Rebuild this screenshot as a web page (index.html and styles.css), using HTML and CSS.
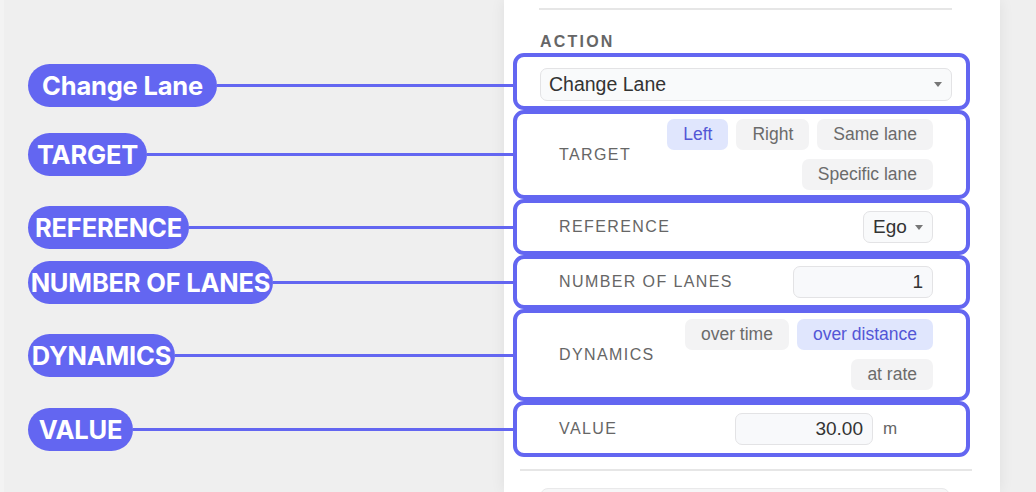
FILE: index.html
```html
<!DOCTYPE html>
<html lang="en">
<head>
<meta charset="utf-8">
<title>Change Lane action</title>
<link rel="stylesheet" href="styles.css">
</head>
<body>
<div class="page">
  <div class="panel-bg"></div>

  <div class="panel-head r1">
    <div class="divider"></div>
    <div class="section-title">ACTION</div>
  </div>

  <div class="note note-first r2"><span class="pill" style="width:189px">Change Lane</span><span class="leader"></span></div>
  <div class="hl hl-select r2">
    <div class="select"><span>Change Lane</span><span class="caret"></span></div>
  </div>

  <div class="note r3"><span class="pill" style="width:119px">TARGET</span><span class="leader"></span></div>
  <div class="hl r3">
    <span class="field-label">TARGET</span>
    <div class="chips">
      <span class="chip active">Left</span>
      <span class="chip">Right</span>
      <span class="chip">Same lane</span>
      <span class="chip">Specific lane</span>
    </div>
  </div>

  <div class="note r4"><span class="pill" style="width:161px">REFERENCE</span><span class="leader"></span></div>
  <div class="hl r4">
    <span class="field-label">REFERENCE</span>
    <div class="select select-small"><span>Ego</span><span class="caret"></span></div>
  </div>

  <div class="note r5"><span class="pill" style="width:245px">NUMBER OF LANES</span><span class="leader"></span></div>
  <div class="hl hl-tight r5">
    <span class="field-label">NUMBER OF LANES</span>
    <div class="num-input">1</div>
  </div>

  <div class="note r6"><span class="pill" style="width:147px">DYNAMICS</span><span class="leader"></span></div>
  <div class="hl hl-roomy r6">
    <span class="field-label">DYNAMICS</span>
    <div class="chips">
      <span class="chip">over time</span>
      <span class="chip active">over distance</span>
      <span class="chip">at rate</span>
    </div>
  </div>

  <div class="note r7"><span class="pill" style="width:105px">VALUE</span><span class="leader"></span></div>
  <div class="hl r7">
    <span class="field-label">VALUE</span>
    <div class="value-group">
      <div class="num-input value-input">30.00</div>
      <span class="unit">m</span>
    </div>
  </div>

  <div class="panel-foot r8">
    <div class="foot-divider"></div>
    <div class="foot-box"></div>
  </div>
</div>
</body>
</html>
```

FILE: styles.css
```css
* { box-sizing: border-box; }
html, body { margin: 0; height: 100%; }
body {
  background: #efefef;
  font-family: "Liberation Sans", Arial, sans-serif;
  overflow: hidden;
}
.page {
  display: grid;
  grid-template-columns: 500px 496px 1fr;
  grid-template-rows: repeat(7, auto) minmax(0, 1fr);
  height: 492px;
  border-left: 4px solid #f3f3f3;
}
.panel-bg {
  grid-column: 2;
  grid-row: 1 / -1;
  background: #fff;
  box-shadow: 0 0 14px rgba(0, 0, 0, 0.07);
}
.r1 { grid-row: 1; }
.r2 { grid-row: 2; }
.r3 { grid-row: 3; }
.r4 { grid-row: 4; }
.r5 { grid-row: 5; }
.r6 { grid-row: 6; }
.r7 { grid-row: 7; }
.r8 { grid-row: 8; }

.panel-head {
  grid-column: 2;
  padding: 8px 48px 0 35px;
}
.divider { height: 2px; background: #e6e6e6; }
.section-title {
  margin: 22px 0 1px 1px;
  font-weight: 700;
  font-size: 16px;
  line-height: 20px;
  letter-spacing: 2.2px;
  color: #666;
}

.note {
  grid-column: 1;
  display: flex;
  align-items: center;
  padding-left: 24px;
  margin-right: -9px;
}
.note-first { padding-top: 7px; }
.pill {
  flex: none;
  height: 43px;
  border-radius: 22px;
  background: #6366f1;
  color: #fff;
  font-family: Inter, "Liberation Sans", sans-serif;
  font-weight: 700;
  font-size: 25.5px;
  letter-spacing: -0.2px;
  display: flex;
  align-items: center;
  justify-content: center;
  white-space: nowrap;
}
.leader { flex: 1; height: 3px; background: #6366f1; }

.hl {
  grid-column: 2;
  margin: 0 30px 0 9px;
  border: 4px solid #6366f1;
  border-radius: 11px;
  padding: 5px 33px 5px 42px;
  min-height: 56px;
  display: flex;
  align-items: center;
  justify-content: space-between;
}
.hl-tight { min-height: 54px; }
.hl-roomy { padding-top: 6px; padding-bottom: 7px; }
.hl-select { display: block; padding: 11px 14px 5px 23px; }

.select {
  display: flex;
  align-items: center;
  justify-content: space-between;
  height: 33px;
  border: 1.5px solid #e3e3e5;
  border-radius: 7px;
  background: #f9fafb;
  padding: 0 9px 0 8px;
  font-size: 19.5px;
  color: #333;
}
.select-small {
  height: 32px;
  width: 70px;
  gap: 8px;
  padding: 0 9px 0 9px;
  font-size: 19px;
}
.caret {
  width: 0;
  height: 0;
  border-left: 4.5px solid transparent;
  border-right: 4.5px solid transparent;
  border-top: 5px solid #777;
}

.field-label {
  font-size: 16px;
  letter-spacing: 1.4px;
  color: #666;
  white-space: nowrap;
}
.chips {
  width: 270px;
  display: flex;
  flex-wrap: wrap;
  justify-content: flex-end;
  gap: 9px 8px;
}
.chip {
  height: 31px;
  padding: 0 16px;
  border-radius: 7px;
  background: #f3f3f4;
  color: #6b6b6b;
  font-size: 17.5px;
  display: flex;
  align-items: center;
  white-space: nowrap;
}
.chip.active { background: #e0e6fd; color: #5356d6; }

.num-input {
  width: 140px;
  height: 32px;
  border: 1.5px solid #e3e3e5;
  border-radius: 7px;
  background: #f8f9fb;
  padding-right: 9px;
  font-size: 19px;
  color: #333;
  display: flex;
  align-items: center;
  justify-content: flex-end;
}
.value-group { display: flex; align-items: center; gap: 10px; }
.value-input { width: 138px; }
.unit { width: 50px; font-size: 17px; color: #666; }

.panel-foot {
  grid-column: 2;
  padding-top: 12px;
  overflow: hidden;
}
.foot-divider { height: 2px; background: #e6e6e6; margin: 0 28px 0 16px; }
.foot-box {
  margin: 17px 50px 0 36px;
  height: 40px;
  border: 1px solid #e9e9ea;
  border-radius: 8px;
  background: #f6f6f7;
}
```
